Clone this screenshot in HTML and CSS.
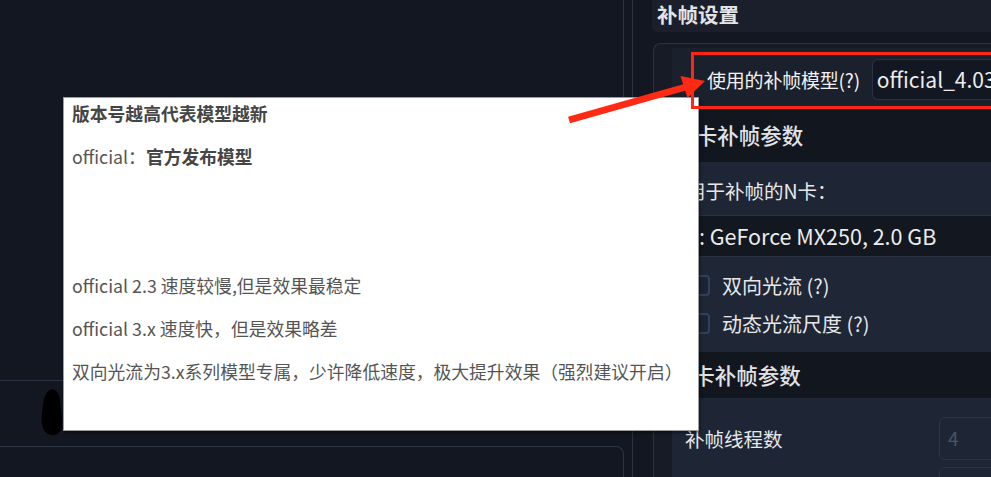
FILE: index.html
```html
<!DOCTYPE html>
<html lang="zh-CN">
<head>
<meta charset="utf-8">
<title>补帧设置</title>
<link rel="stylesheet" href="styles.css">
</head>
<body>
<div class="app">
  <div class="left">
    <div class="left-top"></div>
    <div class="left-gap"></div>
    <div class="left-bottom"></div>
  </div>
  <div class="right">
    <div class="title-bar">补帧设置</div>
    <div class="group">
      <div class="inner">
        <div class="row-model">
          <span class="label">使用的补帧模型(?)</span>
          <div class="combo">official_4.03</div>
        </div>
        <div class="section-head">N卡补帧参数</div>
        <div class="row-gpu-label">用于补帧的N卡：</div>
        <div class="combo-gpu">0: GeForce MX250, 2.0 GB</div>
        <div class="checks">
          <div class="check-row"><span class="box"></span><span>双向光流 (?)</span></div>
          <div class="check-row"><span class="box"></span><span>动态光流尺度 (?)</span></div>
        </div>
        <div class="section-head head2">A卡补帧参数</div>
        <div class="row-threads">
          <span class="label">补帧线程数</span>
          <div class="num-input">4</div>
        </div>
        <div class="row-threads2">
          <div class="num-input"></div>
        </div>
      </div>
    </div>
  </div>
</div>

<div class="tooltip">
  <p class="strong">版本号越高代表模型越新</p>
  <p>official：<b>官方发布模型</b></p>
  <p>&nbsp;</p>
  <p>&nbsp;</p>
  <p>official 2.3 速度较慢,但是效果最稳定</p>
  <p>official 3.x 速度快，但是效果略差</p>
  <p>双向光流为3.x系列模型专属，少许降低速度，极大提升效果（强烈建议开启）</p>
</div>

<svg class="blob" width="30" height="50" viewBox="0 0 30 50">
  <path d="M12 2 C18 0 22 6 22 14 C23 22 25 30 24 38 C23 46 16 49 10 46 C4 43 3 34 4 26 C5 18 5 6 12 2 Z" fill="#000"/>
</svg>

<div class="mark-box"></div>

<svg class="arrow" width="991" height="477" viewBox="0 0 991 477">
  <line x1="569" y1="120" x2="686" y2="87" stroke="#ff2a14" stroke-width="7"/>
  <polygon points="680.5,76 705,81 687.5,98" fill="#ff2a14"/>
</svg>
</body>
</html>
```
FILE: styles.css
```css
* { box-sizing: border-box; }
html, body {
  margin: 0;
  padding: 0;
  overflow: hidden;
}
body {
  width: 991px;
  height: 477px;
  background: #131721;
  font-family: "Noto Sans CJK SC", "Noto Sans", sans-serif;
  color: #e8e8ea;
  position: relative;
}

.app {
  display: grid;
  grid-template-columns: 624px 359px;
  column-gap: 8px;
  height: 477px;
  overflow: hidden;
}

.left {
  display: flex;
  flex-direction: column;
}
.left-top {
  height: 381px;
  border-right: 1px solid #2a3140;
  border-bottom: 1px solid #2a3140;
  border-bottom-right-radius: 6px;
}
.left-gap { height: 65px; }
.left-bottom {
  flex: 1;
  border-top: 1px solid #2c3444;
  border-right: 1px solid #2c3444;
  border-top-right-radius: 8px;
}

.right {
  border-left: 1px solid #2a3140;
  padding-left: 19px;
  display: flex;
  flex-direction: column;
  min-width: 0;
  overflow: hidden;
}

.title-bar {
  height: 32px;
  line-height: 29px;
  padding-left: 5px;
  background: #1a1f2b;
  border-radius: 0 0 0 6px;
  font-size: 20.5px;
  font-weight: 700;
  color: #e4e4e6;
  white-space: nowrap;
}

.group {
  flex: 1;
  margin-top: 11px;
  margin-left: 1px;
  border: 1px solid #2a3242;
  border-right: none;
  border-bottom: none;
  border-top-left-radius: 8px;
  background: #161b25;
  padding: 4px 0 0 18px;
  overflow: hidden;
}

.inner {
  display: flex;
  flex-direction: column;
}

.row-model {
  height: 62px;
  display: flex;
  align-items: center;
  padding-left: 35px;
  background: #1a202c;
  font-size: 19px;
  white-space: nowrap;
}
.row-model .label {
  color: #f2f2f2;
  letter-spacing: -0.2px;
}
.combo {
  margin-left: 12px;
  height: 41px;
  width: 200px;
  flex: none;
  background: #131722;
  border: 1px solid #2a3344;
  border-right: none;
  border-radius: 6px 0 0 6px;
  padding-left: 4px;
  font-size: 21px;
  line-height: 38px;
  color: #ececec;
}

.section-head {
  height: 52px;
  line-height: 50px;
  background: #12161f;
  font-size: 21.5px;
  font-weight: 500;
  color: #e2e2e4;
  padding-left: 8px;
  white-space: nowrap;
}
.head2 {
  height: 46px;
  line-height: 46px;
}

.row-gpu-label {
  height: 53px;
  line-height: 58px;
  background: #1e2535;
  padding-left: 14px;
  font-size: 19.5px;
  white-space: nowrap;
}

.combo-gpu {
  height: 42px;
  line-height: 39px;
  background: #13171f;
  border-top: 1px solid #2a3242;
  border-bottom: 1px solid #2a3242;
  padding-left: 15px;
  font-size: 21.5px;
  white-space: nowrap;
  color: #ececec;
}

.checks {
  background: #1f2737;
  padding: 9px 0 10px 0;
}
.check-row {
  height: 38px;
  display: flex;
  align-items: center;
  gap: 12px;
  padding-left: 18px;
  font-size: 20px;
  white-space: nowrap;
}
.check-row .box {
  width: 20px;
  height: 21px;
  border: 2px solid #30415f;
  border-radius: 4px;
  background: #1c2434;
  flex: none;
}

.row-threads {
  height: 69px;
  display: flex;
  align-items: center;
  padding-left: 13px;
  padding-top: 12px;
  background: #1e2636;
  font-size: 19.5px;
  white-space: nowrap;
}
.row-threads .label { color: #e6e6e8; }
.num-input {
  margin-left: auto;
  margin-right: -20px;
  width: 72px;
  height: 43px;
  border: 1px solid #2b3548;
  border-radius: 6px;
  padding-left: 8px;
  line-height: 40px;
  color: #4b5364;
  font-size: 19px;
  flex: none;
}
.row-threads2 {
  display: flex;
  background: #1e2636;
  height: 10px;
  overflow: visible;
}

.tooltip {
  position: absolute;
  left: 63px;
  top: 97px;
  width: 636px;
  height: 334px;
  background: #fff;
  border: 1px solid #9d9d9d;
  box-shadow: 1px 2px 3px rgba(0, 0, 0, 0.45);
  padding: 3px 8px;
  font-size: 17.8px;
  color: #555;
  white-space: nowrap;
}
.tooltip p {
  margin: 0 0 19px 0;
  line-height: 24px;
}
.tooltip .strong {
  font-weight: 700;
  color: #454545;
}
.tooltip b {
  font-weight: 700;
  color: #454545;
}

.blob {
  position: absolute;
  left: 38px;
  top: 388px;
}

.mark-box {
  position: absolute;
  left: 691px;
  top: 52px;
  width: 320px;
  height: 57px;
  border: 3px solid #ff2617;
}

.arrow {
  position: absolute;
  left: 0;
  top: 0;
  pointer-events: none;
}
```
